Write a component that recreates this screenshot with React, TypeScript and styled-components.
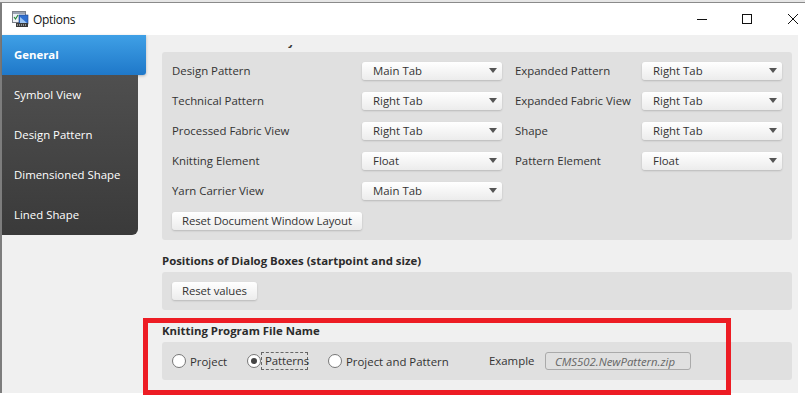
import React from 'react';
import styled, { createGlobalStyle } from 'styled-components';

const GlobalStyle = createGlobalStyle`
  html, body {
    margin: 0;
    padding: 0;
    background: #fff;
    overflow: hidden;
  }
  body {
    font-family: 'Open Sans', 'Noto Sans', sans-serif;
    font-size: 11.4px;
    color: #333;
  }
`;

const Page = styled.div`
  position: relative;
  width: 805px;
  height: 407px;
  overflow: hidden;
  background: #fff;
`;

const BehindStrip = styled.div`
  height: 2px;
  background: #e6e6e6;
  border-bottom: 1px solid #8a8a8a;
`;

const Window = styled.div`
  width: 796px;
  border-left: 2px solid #7d7d7d;
  margin-right: 7px;
`;

const TitleBar = styled.div`
  display: flex;
  align-items: center;
  height: 32px;
  padding-left: 10px;
  background: #fff;
`;

const WindowTitle = styled.span`
  flex: 1;
  margin-left: 4px;
  color: #111;
  font-size: 12px;
  letter-spacing: -0.3px;
`;

const WindowButton = styled.svg<{ $gap: number }>`
  display: block;
  flex: none;
  margin-left: ${(p) => p.$gap}px;
`;

const Body = styled.div`
  display: flex;
  height: 358px;
  background: #f0f0f0;
`;

const Sidebar = styled.nav`
  flex: none;
  width: 144px;
  height: 200px;
  display: flex;
  flex-direction: column;
`;

const NavItem = styled.div<{ $active?: boolean }>`
  display: flex;
  align-items: center;
  height: 40px;
  box-sizing: border-box;
  padding: 0 0 2px 12px;
  color: #fff;
  font-weight: ${(p) => (p.$active ? 700 : 400)};
  width: ${(p) => (p.$active ? '144px' : '136px')};
  border-radius: ${(p) => (p.$active ? '0 0 3px 0' : '0')};
  background: ${(p) => (p.$active ? 'linear-gradient(#3fa0e6, #1f78c9)' : 'transparent')};
  box-shadow: ${(p) => (p.$active ? '0 1px 3px rgba(0, 0, 0, 0.25)' : 'none')};
`;

const DarkGroup = styled.div`
  width: 136px;
  border-radius: 0 0 6px 0;
  background: linear-gradient(#4f4f4f, #3a3a3a);
`;

const Content = styled.div`
  flex: 1;
  padding: 0 6px 0 16px;
`;

/* the group title above the first panel is scrolled away, only a descender still shows */
const ScrolledTitle = styled.div`
  height: 3px;
  margin: 10px 0 4px;
  overflow: hidden;
  padding-left: 126px;
  font-weight: 700;
  line-height: 16px;
  color: #333;

  span {
    display: block;
    margin-top: -12px;
  }
`;

const SectionTitle = styled.div`
  display: flex;
  align-items: center;
  box-sizing: border-box;
  height: 32px;
  padding-top: 8px;
  font-weight: 700;
  color: #2b2b2b;
`;

const Panel = styled.div`
  box-sizing: border-box;
  padding: 10px;
  background: #e0e0e0;
  border-radius: 3px;
`;

const SettingsGrid = styled.div`
  display: grid;
  grid-template-columns: 190px 140px 140px 140px;
  grid-auto-rows: 18px;
  row-gap: 12px;
  align-items: center;
  margin-bottom: 12px;
`;

const Label = styled.span`
  color: #333;
  white-space: nowrap;
  padding-bottom: 2px;
`;

const LeftLabel = styled(Label)`
  grid-column: 1;
`;

const RightLabel = styled(Label)`
  grid-column: 3;
  padding-left: 13px;
`;

const ExampleLabel = styled(Label)`
  flex: none;
  width: 56px;
`;

const Select = styled.div`
  display: flex;
  align-items: center;
  justify-content: space-between;
  height: 18px;
  box-sizing: border-box;
  padding: 0 5px 2px 11px;
  border-radius: 3px;
  background: linear-gradient(#ffffff, #ececec);
  box-shadow: 0 1px 2px rgba(0, 0, 0, 0.18);
  color: #333;
`;

const Caret = styled.span`
  width: 0;
  height: 0;
  margin-top: 0;
  border-left: 4px solid transparent;
  border-right: 4px solid transparent;
  border-top: 5px solid #555;
`;

const Button = styled.div`
  display: inline-flex;
  align-items: center;
  box-sizing: border-box;
  height: 18px;
  padding: 0 10px 2px;
  border-radius: 3px;
  background: linear-gradient(#ffffff, #ececec);
  box-shadow: 0 1px 2px rgba(0, 0, 0, 0.18);
  color: #333;
  letter-spacing: -0.1px;
  vertical-align: top;
`;

const RadioRow = styled.div`
  display: flex;
  align-items: center;
  height: 18px;
`;

const RadioOption = styled.div<{ $width: number }>`
  display: flex;
  align-items: center;
  flex: none;
  width: ${(p) => p.$width}px;
`;

const RadioCircle = styled.span<{ $checked?: boolean }>`
  display: flex;
  align-items: center;
  justify-content: center;
  flex: none;
  box-sizing: border-box;
  width: 14px;
  height: 14px;
  border-radius: 50%;
  border: 1px solid #777;
  background: #fff;
  margin-right: 4px;

  &::after {
    content: '';
    display: ${(p) => (p.$checked ? 'block' : 'none')};
    width: 6px;
    height: 6px;
    border-radius: 50%;
    background: #444;
  }
`;

const FocusText = styled.span`
  box-sizing: border-box;
  flex: none;
  width: 47px;
  height: 18px;
  margin-left: -4px;
  padding-left: 3px;
  border: 1px dashed #666;
  line-height: 16px;
  letter-spacing: -0.1px;
  white-space: nowrap;
`;

const ExampleField = styled.div`
  display: flex;
  align-items: center;
  flex: none;
  box-sizing: border-box;
  width: 146px;
  height: 18px;
  padding-left: 9px;
  border: 1px solid #aaa;
  border-radius: 3px;
  color: #666;
  font-style: italic;
`;

const Highlight = styled.div`
  position: absolute;
  left: 143px;
  top: 318px;
  width: 588px;
  height: 77px;
  box-sizing: border-box;
  border: 5px solid #ed1c24;
`;

const AppIcon = () => (
  <svg width="17" height="17" viewBox="0 0 17 17" style={{ flex: 'none' }}>
    <rect x="0.5" y="0.5" width="13" height="11" fill="#eef1f6" stroke="#7b8088" />
    <rect x="1" y="1" width="12" height="2" fill="#9aa3b2" />
    <path d="M2 6l1.5 2L6 4" fill="none" stroke="#2a8a3a" strokeWidth="1.2" />
    <rect x="7" y="4" width="9" height="9" fill="#2f6fd0" stroke="#1c3f80" strokeWidth="0.6" />
    <path d="M8 6l7 6H8z" fill="#9cc4f2" />
    <rect x="4" y="12" width="12" height="4" fill="#3a3a3a" />
    <path d="M5 14h10" stroke="#e8e8e8" strokeWidth="1" strokeDasharray="1 1" />
  </svg>
);

type Row = [string, string, string?, string?];

const rows: Row[] = [
  ['Design Pattern', 'Main Tab', 'Expanded Pattern', 'Right Tab'],
  ['Technical Pattern', 'Right Tab', 'Expanded Fabric View', 'Right Tab'],
  ['Processed Fabric View', 'Right Tab', 'Shape', 'Right Tab'],
  ['Knitting Element', 'Float', 'Pattern Element', 'Float'],
  ['Yarn Carrier View', 'Main Tab'],
];

const navItems = ['Symbol View', 'Design Pattern', 'Dimensioned Shape', 'Lined Shape'];

const App: React.FC = () => {
  return (
    <Page>
      <GlobalStyle />
      <BehindStrip />
      <Window>
        <TitleBar>
          <AppIcon />
          <WindowTitle>Options</WindowTitle>
          <WindowButton $gap={0} width="10" height="10" viewBox="0 0 10 10">
            <path d="M0 5.5h10" stroke="#111" />
          </WindowButton>
          <WindowButton $gap={35} width="10" height="10" viewBox="0 0 10 10">
            <rect x="0.5" y="0.5" width="9" height="9" fill="none" stroke="#111" />
          </WindowButton>
          <WindowButton $gap={36} width="10" height="10" viewBox="0 0 10 10">
            <path d="M0 0l10 10M10 0L0 10" stroke="#111" />
          </WindowButton>
        </TitleBar>
        <Body>
          <Sidebar>
            <NavItem $active>General</NavItem>
            <DarkGroup>
              {navItems.map((item) => (
                <NavItem key={item}>{item}</NavItem>
              ))}
            </DarkGroup>
          </Sidebar>
          <Content>
            <ScrolledTitle>
              <span>y</span>
            </ScrolledTitle>
            <Panel>
              <SettingsGrid>
                {rows.map(([label, value, label2, value2]) => (
                  <React.Fragment key={label}>
                    <LeftLabel>{label}</LeftLabel>
                    <Select>
                      {value}
                      <Caret />
                    </Select>
                    {label2 && <RightLabel>{label2}</RightLabel>}
                    {value2 && (
                      <Select>
                        {value2}
                        <Caret />
                      </Select>
                    )}
                  </React.Fragment>
                ))}
              </SettingsGrid>
              <Button>Reset Document Window Layout</Button>
            </Panel>
            <SectionTitle>Positions of Dialog Boxes (startpoint and size)</SectionTitle>
            <Panel>
              <Button>Reset values</Button>
            </Panel>
            <SectionTitle>Knitting Program File Name</SectionTitle>
            <Panel>
              <RadioRow>
                <RadioOption $width={75}>
                  <RadioCircle />
                  Project
                </RadioOption>
                <RadioOption $width={81}>
                  <RadioCircle $checked />
                  <FocusText>Patterns</FocusText>
                </RadioOption>
                <RadioOption $width={161}>
                  <RadioCircle />
                  Project and Pattern
                </RadioOption>
                <ExampleLabel>Example</ExampleLabel>
                <ExampleField>CMS502.NewPattern.zip</ExampleField>
              </RadioRow>
            </Panel>
          </Content>
        </Body>
      </Window>
      <Highlight />
    </Page>
  );
};

export default App;
